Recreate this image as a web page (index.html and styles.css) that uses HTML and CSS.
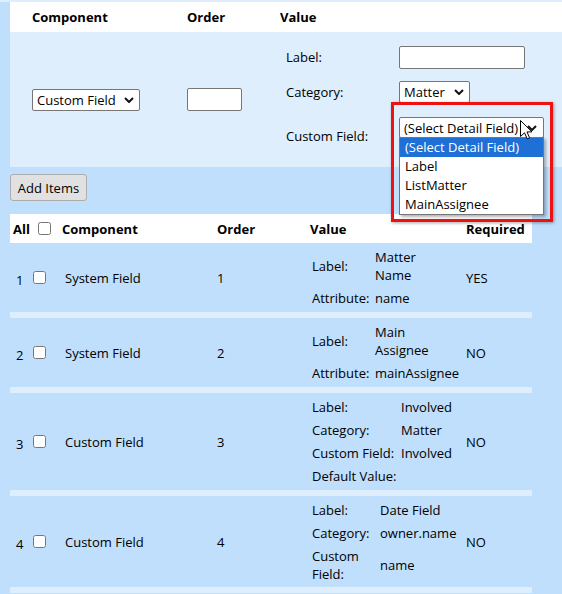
FILE: index.html
```html
<!DOCTYPE html>
<html>
<head>
<meta charset="utf-8">
<title>Detail Fields</title>
<link rel="stylesheet" href="styles.css">
</head>
<body>
<div class="top-strip"></div>

<section class="editor">
  <div class="editor-head">
    <div>Component</div>
    <div>Order</div>
    <div>Value</div>
  </div>
  <div class="editor-body">
    <div class="cell-center">
      <div class="select sel-component"><span>Custom Field</span><svg class="chev" viewBox="0 0 10 6" width="10" height="6"><path d="M1 1 L5 5 L9 1" /></svg></div>
    </div>
    <div class="cell-center">
      <input class="text-input order-input" type="text">
    </div>
    <div class="value-grid">
      <div class="vlabel">Label:</div>
      <div><input class="text-input label-input" type="text"></div>
      <div class="vlabel">Category:</div>
      <div><div class="select sel-category"><span>Matter</span><svg class="chev" viewBox="0 0 10 6" width="10" height="6"><path d="M1 1 L5 5 L9 1" /></svg></div></div>
      <div class="vlabel">Custom Field:</div>
      <div class="field-wrap">
        <div class="select sel-field"><span>(Select Detail Field)</span><svg class="chev" viewBox="0 0 10 6" width="10" height="6"><path d="M1 1 L5 5 L9 1" /></svg></div>
        <ul class="dropdown">
          <li class="opt active">(Select Detail Field)</li>
          <li class="opt">Label</li>
          <li class="opt">ListMatter</li>
          <li class="opt">MainAssignee</li>
        </ul>
      </div>
    </div>
  </div>
</section>

<div class="actions"><button class="btn" type="button">Add Items</button></div>

<section class="items">
  <div class="items-head">
    <div class="c-sel-h"><span>All</span><input type="checkbox" class="chk chk-h"></div>
    <div class="c-comp-h">Component</div>
    <div class="c-ord">Order</div>
    <div class="c-val-h">Value</div>
    <div class="c-req">Required</div>
  </div>

  <div class="item-row">
    <div class="c-sel"><span class="num">1</span><input type="checkbox" class="chk"></div>
    <div class="c-comp">System Field</div>
    <div class="c-ord">1</div>
    <div class="c-val">
      <div class="kv kv-a">
        <div>Label:</div><div class="wrap">Matter Name</div>
        <div>Attribute:</div><div>name</div>
      </div>
    </div>
    <div class="c-req">YES</div>
  </div>

  <div class="item-row">
    <div class="c-sel"><span class="num">2</span><input type="checkbox" class="chk"></div>
    <div class="c-comp">System Field</div>
    <div class="c-ord">2</div>
    <div class="c-val">
      <div class="kv kv-a">
        <div>Label:</div><div class="wrap">Main Assignee</div>
        <div>Attribute:</div><div>mainAssignee</div>
      </div>
    </div>
    <div class="c-req">NO</div>
  </div>

  <div class="item-row">
    <div class="c-sel"><span class="num">3</span><input type="checkbox" class="chk"></div>
    <div class="c-comp">Custom Field</div>
    <div class="c-ord">3</div>
    <div class="c-val">
      <div class="kv kv-b">
        <div>Label:</div><div>Involved</div>
        <div>Category:</div><div>Matter</div>
        <div>Custom Field:</div><div>Involved</div>
        <div>Default Value:</div><div></div>
      </div>
    </div>
    <div class="c-req">NO</div>
  </div>

  <div class="item-row">
    <div class="c-sel"><span class="num">4</span><input type="checkbox" class="chk"></div>
    <div class="c-comp">Custom Field</div>
    <div class="c-ord">4</div>
    <div class="c-val">
      <div class="kv kv-c kv-tight">
        <div>Label:</div><div>Date Field</div>
        <div>Category:</div><div>owner.name</div>
        <div class="wrap">Custom Field:</div><div>name</div>
      </div>
    </div>
    <div class="c-req">NO</div>
  </div>
  <div class="item-row item-tail"></div>
</section>

<div class="highlight-box"></div>
<svg class="cursor" viewBox="0 0 13 20" width="13" height="20"><path d="M0.5 0.5 L0.5 16.5 L4.5 12.8 L7.2 18.8 L9.6 17.8 L7 11.9 L12 11.9 Z" /></svg>
</body>
</html>
```

FILE: styles.css
```css
* { box-sizing: border-box; }

html, body { margin: 0; padding: 0; }

body {
  position: relative;
  width: 562px;
  height: 594px;
  overflow: hidden;
  background: #bfdffc;
  font-family: "Open Sans", "Noto Sans", sans-serif;
  font-size: 13px;
  color: #000;
}

.top-strip { height: 2px; background: #deeefd; }

/* ---------- editor (top table) ---------- */
.editor { margin-left: 10px; }

.editor-head,
.editor-body {
  display: grid;
  grid-template-columns: 155px 93px 1fr;
  padding-left: 22px;
}

.editor-head {
  height: 30px;
  align-items: center;
  background: #fff;
  font-weight: bold;
}

.editor-body {
  height: 135px;
  background: #deeefd;
}

.cell-center { align-self: center; }

.select {
  display: flex;
  align-items: center;
  justify-content: space-between;
  background: #fff;
  border: 1px solid #767676;
  border-radius: 2px;
  padding: 0 5px 0 4px;
  height: 22px;
  white-space: nowrap;
}

.chev { flex: none; }
.chev path { fill: none; stroke: #111; stroke-width: 2; }

.sel-component { width: 108px; }
.sel-category { width: 71px; }
.sel-field { width: 145px; height: 21px; padding-right: 6px; }

.text-input {
  display: block;
  margin: 0;
  background: #fff;
  border: 1px solid #767676;
  border-radius: 2px;
  height: 23px;
  font: inherit;
}

.order-input { width: 55px; }
.label-input { width: 126px; }

.value-grid {
  display: grid;
  grid-template-columns: 113px auto;
  grid-template-rows: 34px 36px 52px;
  align-items: center;
  padding: 8px 0 0 6px;
}

.field-wrap {
  position: relative;
  align-self: start;
  margin-top: 7px;
  width: 145px;
}

.dropdown {
  position: absolute;
  top: calc(100% - 1px);
  left: 0;
  width: 145px;
  margin: 0;
  padding: 0;
  list-style: none;
  background: #fff;
  border: 1px solid #767676;
  box-shadow: 2px 2px 3px rgba(0, 0, 0, 0.3);
  z-index: 2;
}

.opt {
  height: 19px;
  line-height: 19px;
  padding-left: 5px;
  white-space: nowrap;
}

.opt.active { background: #1e6fd6; color: #fff; }

/* ---------- actions ---------- */
.actions { margin: 7px 0 0 10px; }

.btn {
  display: block;
  width: 77px;
  height: 27px;
  margin: 0;
  padding: 0;
  background: #e1e1e1;
  border: 1px solid #adadad;
  border-radius: 3px;
  font: inherit;
  color: #000;
}

/* ---------- items table ---------- */
.items { margin: 13px 0 0 10px; width: 522px; }

.items-head,
.item-row {
  display: grid;
  grid-template-columns: 50px 153px 93px 156px 70px;
  align-items: center;
}

.items-head {
  height: 29px;
  background: #fff;
  font-weight: bold;
}

.item-row { border-bottom: 6px solid #deeefd; }
.item-tail { height: 4px; border-bottom: 0; }

.chk {
  margin: 0;
  width: 13px;
  height: 13px;
}

.c-sel-h { display: flex; align-items: center; padding-left: 3px; }
.chk-h { margin-left: 8px; }

.c-sel { display: flex; align-items: center; padding-left: 6px; }
.c-sel .num { padding-top: 5px; width: 12px; }
.c-sel .chk { margin-left: 5px; }

.c-comp-h { padding-left: 2px; }
.c-comp { padding-left: 5px; }
.c-ord { padding-left: 4px; }
.c-val-h { padding-left: 4px; }
.c-val { padding-left: 6px; }
.c-req { padding-left: 4px; }

.kv {
  display: grid;
  row-gap: 5px;
  line-height: 18px;
  padding: 5px 0;
  align-items: center;
}

.kv-a { grid-template-columns: 63px auto; }
.kv-b { grid-template-columns: 89px auto; }
.kv-c { grid-template-columns: 68px auto; }
.kv-tight { padding-bottom: 4px; }

.wrap { width: min-content; }

/* ---------- overlays ---------- */
.highlight-box {
  position: absolute;
  left: 391px;
  top: 102px;
  width: 162px;
  height: 120px;
  border: 3px solid #ee1111;
  box-shadow: 1px 1px 3px rgba(0, 0, 0, 0.35);
  z-index: 3;
}

.cursor {
  position: absolute;
  left: 520px;
  top: 120px;
  z-index: 4;
}
.cursor path { fill: #fff; stroke: #000; stroke-width: 1; stroke-linejoin: round; }
```
